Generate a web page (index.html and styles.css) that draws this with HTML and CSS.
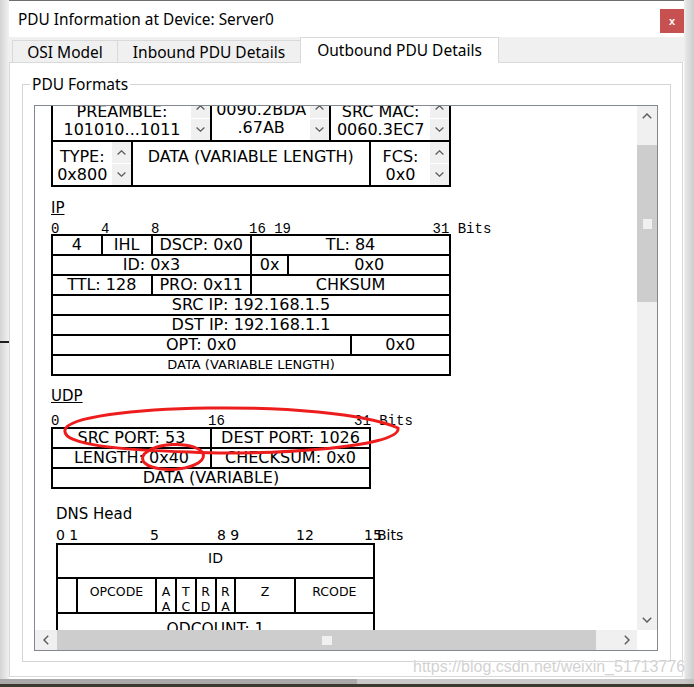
FILE: index.html
```html
<!DOCTYPE html>
<html lang="en">
<head>
<meta charset="utf-8">
<title>PDU Information at Device: Server0</title>
<link rel="stylesheet" href="styles.css">
</head>
<body>
<div class="desktop">
  <div class="window">
    <header class="titlebar">
      <h1 class="title">PDU Information at Device: Server0</h1>
      <button class="close" type="button">x</button>
    </header>
    <nav class="tabs">
      <div class="tab tab-osi">OSI Model</div>
      <div class="tab tab-in">Inbound PDU Details</div>
      <div class="tab tab-out active">Outbound PDU Details</div>
    </nav>
    <main class="panel">
      <fieldset class="group">
        <legend class="group-title">PDU Formats</legend>
        <div class="scrollpane">
          <div class="viewport">
            <div class="content">
              <table class="pdu eth">
                <colgroup><col span="40"></colgroup>
                <tr>
                  <td colspan="16"><div class="field"><div class="field-text"><span>PREAMBLE:</span><span>101010...1011</span></div><div class="spin"><span class="spin-btn"><svg class="chev" viewBox="0 0 9 5"><path d="M.6 4.4 4.5 .8 8.4 4.4"/></svg></span><span class="spin-btn"><svg class="chev" viewBox="0 0 9 5"><path d="M.6 .6 4.5 4.2 8.4 .6"/></svg></span></div></div></td>
                  <td colspan="12"><div class="field"><div class="field-text scrolled"><span>0090.2BDA</span><span>.67AB</span></div><div class="spin"><span class="spin-btn"><svg class="chev" viewBox="0 0 9 5"><path d="M.6 4.4 4.5 .8 8.4 4.4"/></svg></span><span class="spin-btn"><svg class="chev" viewBox="0 0 9 5"><path d="M.6 .6 4.5 4.2 8.4 .6"/></svg></span></div></div></td>
                  <td colspan="12"><div class="field"><div class="field-text"><span>SRC MAC:</span><span>0060.3EC7</span></div><div class="spin"><span class="spin-btn"><svg class="chev" viewBox="0 0 9 5"><path d="M.6 4.4 4.5 .8 8.4 4.4"/></svg></span><span class="spin-btn"><svg class="chev" viewBox="0 0 9 5"><path d="M.6 .6 4.5 4.2 8.4 .6"/></svg></span></div></div></td>
                </tr>
                <tr>
                  <td colspan="8"><div class="field"><div class="field-text"><span>TYPE:</span><span>0x800</span></div><div class="spin"><span class="spin-btn"><svg class="chev" viewBox="0 0 9 5"><path d="M.6 4.4 4.5 .8 8.4 4.4"/></svg></span><span class="spin-btn"><svg class="chev" viewBox="0 0 9 5"><path d="M.6 .6 4.5 4.2 8.4 .6"/></svg></span></div></div></td>
                  <td colspan="24"><div class="field"><div class="field-text"><span>DATA (VARIABLE LENGTH)</span></div></div></td>
                  <td colspan="8"><div class="field"><div class="field-text"><span>FCS:</span><span>0x0</span></div><div class="spin"><span class="spin-btn"><svg class="chev" viewBox="0 0 9 5"><path d="M.6 4.4 4.5 .8 8.4 4.4"/></svg></span><span class="spin-btn"><svg class="chev" viewBox="0 0 9 5"><path d="M.6 .6 4.5 4.2 8.4 .6"/></svg></span></div></div></td>
                </tr>
              </table>

              <h2 class="layer-title ip-title">IP</h2>
              <div class="bits bits-ip"><span class="b-0">0</span><span class="b-4">4</span><span class="b-8">8</span><span class="b-16">16 19</span><span class="b-31">31 Bits</span></div>
              <table class="pdu ip">
                <colgroup><col span="32"></colgroup>
                <tr><td colspan="4">4</td><td colspan="4">IHL</td><td colspan="8">DSCP: 0x0</td><td colspan="16">TL: 84</td></tr>
                <tr><td colspan="16">ID: 0x3</td><td colspan="3">0x</td><td colspan="13">0x0</td></tr>
                <tr><td colspan="8">TTL: 128</td><td colspan="8">PRO: 0x11</td><td colspan="16">CHKSUM</td></tr>
                <tr><td colspan="32">SRC IP: 192.168.1.5</td></tr>
                <tr><td colspan="32">DST IP: 192.168.1.1</td></tr>
                <tr><td colspan="24">OPT: 0x0</td><td colspan="8">0x0</td></tr>
                <tr><td colspan="32" class="small">DATA (VARIABLE LENGTH)</td></tr>
              </table>

              <h2 class="layer-title udp-title">UDP</h2>
              <div class="bits bits-udp"><span class="b-0">0</span><span class="b-16">16</span><span class="b-31">31 Bits</span></div>
              <table class="pdu udp">
                <colgroup><col span="32"></colgroup>
                <tr><td colspan="16">SRC PORT: 53</td><td colspan="16">DEST PORT: 1026</td></tr>
                <tr><td colspan="16">LENGTH: 0x40</td><td colspan="16">CHECKSUM: 0x0</td></tr>
                <tr><td colspan="32">DATA (VARIABLE)</td></tr>
              </table>

              <div class="dns-block">
                <h2 class="dns-title">DNS Head</h2>
                <div class="bits bits-dns"><span class="b-0">0 1</span><span class="b-5">5</span><span class="b-8">8 9</span><span class="b-12">12</span><span class="b-15">15</span><span class="b-bits">Bits</span></div>
                <table class="pdu dns">
                  <colgroup><col span="16"></colgroup>
                  <tr class="row-id"><td colspan="16"><div class="cell-id">ID</div></td></tr>
                  <tr class="row-flags">
                    <td><div class="flag"></div></td>
                    <td colspan="4"><div class="flag">OPCODE</div></td>
                    <td><div class="flag narrow">AA</div></td>
                    <td><div class="flag narrow">TC</div></td>
                    <td><div class="flag narrow">RD</div></td>
                    <td><div class="flag narrow">RA</div></td>
                    <td colspan="3"><div class="flag">Z</div></td>
                    <td colspan="4"><div class="flag">RCODE</div></td>
                  </tr>
                  <tr class="row-count"><td colspan="16"><div class="cell-count">QDCOUNT: 1</div></td></tr>
                </table>
              </div>
            </div>
          </div>
          <div class="vscroll">
            <span class="arrow-btn up"><svg class="sb-chev" viewBox="0 0 10 6"><path d="M.8 5.2 5 1 9.2 5.2"/></svg></span>
            <span class="track-before"></span>
            <span class="thumb"><span class="grip"></span></span>
            <span class="track-after"></span>
            <span class="arrow-btn down"><svg class="sb-chev" viewBox="0 0 10 6"><path d="M.8 .8 5 5 9.2 .8"/></svg></span>
          </div>
          <div class="hscroll">
            <span class="arrow-btn left"><svg class="sb-chev-h" viewBox="0 0 6 10"><path d="M5.2 .8 1 5 5.2 9.2"/></svg></span>
            <span class="thumb"><span class="grip"></span></span>
            <span class="track-after"></span>
            <span class="arrow-btn right"><svg class="sb-chev-h" viewBox="0 0 6 10"><path d="M.8 .8 5 5 .8 9.2"/></svg></span>
          </div>
          <div class="corner"></div>
        </div>
      </fieldset>
    </main>
  </div>
  <div class="shadow"></div>
  <div class="taskbar"></div>
</div>

<svg class="annotations" width="694" height="687" viewBox="0 0 694 687">
  <path d="M65 430 C70 404 330 398 398 428 C402 448 260 456 190 452 C120 450 62 445 65 430 Z"/>
  <ellipse cx="173" cy="457" rx="30.5" ry="12.5" transform="rotate(-3 173 457)"/>
</svg>
<div class="watermark">https://blog.csdn.net/weixin_51713776</div>
</body>
</html>
```

FILE: styles.css
```css
* { box-sizing: border-box; }
html, body { margin: 0; padding: 0; }
body {
  width: 694px;
  height: 687px;
  overflow: hidden;
  position: relative;
  font-family: "Noto Sans", sans-serif;
  color: #000;
}

.desktop {
  width: 694px;
  height: 687px;
  display: flex;
  flex-direction: column;
  background:
    linear-gradient(#1e1e1e, #1e1e1e) 0 341px / 9px 2px no-repeat,
    linear-gradient(to right, #d4d4d4 0, #f1f1f1 9px, #f1f1f1 684px, #e4e4e4 686px, #cdcdcd 694px);
}

.window {
  margin-left: 9px;
  width: 675px;
  height: 679px;
  background: #fff;
  border-top: 1px solid #6e6e6e;
  display: flex;
  flex-direction: column;
}

.shadow {
  height: 5px;
  background: linear-gradient(to right, #a9a9a9 0, #a9a9a9 357px, #c8c8c8 357px, #c8c8c8 684px, #bdbdbd 694px);
}
.taskbar { height: 3px; background: #3b3a2f; }

/* title bar */
.titlebar {
  height: 36px;
  display: flex;
  align-items: center;
  padding-left: 9px;
}
.title {
  margin: 0;
  font-size: 15.4px;
  font-weight: normal;
  color: #000;
}
.close {
  margin-left: auto;
  align-self: flex-start;
  margin-top: 8px;
  width: 24px;
  height: 24px;
  border: none;
  padding: 0;
  background: #c75050;
  color: #fff;
  font: bold 11px "Liberation Sans", sans-serif;
}

/* tabs */
.tabs {
  height: 25px;
  background: #f0f0f0;
  display: flex;
  align-items: flex-end;
  padding-left: 3px;
}
.tab {
  height: 22px;
  border: 1px solid #d9d9d9;
  border-bottom: none;
  display: flex;
  align-items: center;
  justify-content: center;
  font-size: 15.5px;
  margin-right: -1px;
  background: #f0f0f0;
}
.tab-osi { width: 106px; }
.tab-in { width: 184px; }
.tab-out { width: 199px; }
.tab.active {
  height: 26px;
  margin-bottom: -1px;
  background: #fff;
  position: relative;
  z-index: 1;
  padding-bottom: 1px;
}

/* panel */
.panel {
  flex: 1;
  margin-right: 1px;
  margin-bottom: 2px;
  border: 1px solid #d9d9d9;
  padding: 11px 11px 14px 12px;
  display: flex;
  flex-direction: column;
}
.group {
  margin: 0;
  min-width: 0;
  flex: 1;
  border: 1px solid #d5d5d5;
  padding: 11px 12px 10px 11px;
}
.group-title {
  font-size: 15.5px;
  line-height: 20px;
  padding: 0 2px;
  margin-left: -4px;
}

/* scroll pane */
.scrollpane {
  height: 546px;
  border: 1px solid #828790;
  display: grid;
  grid-template-columns: 1fr 20px;
  grid-template-rows: 1fr 20px;
}
.viewport {
  overflow: hidden;
  background: #fff;
}
.vscroll {
  background: #f0f0f0;
  display: flex;
  flex-direction: column;
}
.hscroll {
  background: #f0f0f0;
  display: flex;
}
.corner { background: #fff; }
.arrow-btn {
  display: flex;
  align-items: center;
  justify-content: center;
  flex: none;
}
.vscroll .arrow-btn.up { height: 20px; }
.vscroll .arrow-btn.down { height: 21px; }
.hscroll .arrow-btn.left { width: 22px; }
.hscroll .arrow-btn.right { width: 21px; }
.vscroll .track-before { height: 19px; flex: none; }
.vscroll .thumb { height: 157px; }
.hscroll .thumb { width: 539px; }
.thumb {
  flex: none;
  background: #cdcdcd;
  display: flex;
  align-items: center;
  justify-content: center;
}
.vscroll .grip { width: 9px; height: 10px; background: #f0f0f0; }
.hscroll .grip { width: 10px; height: 9px; background: #f0f0f0; }
.track-after { flex: 1; }
.sb-chev { width: 10px; height: 6px; fill: none; stroke: #606060; stroke-width: 1.5; }
.sb-chev-h { width: 6px; height: 10px; fill: none; stroke: #606060; stroke-width: 1.5; }

/* PDU content */
.content {
  padding-left: 16px;
  margin-top: -11px;
  font-family: "DejaVu Sans", sans-serif;
  color: #000;
}
.pdu {
  border-collapse: collapse;
  table-layout: fixed;
}
.pdu td {
  border: 2px solid #000;
  padding: 0;
  text-align: center;
  font-size: 16px;
  line-height: 16px;
  white-space: nowrap;
  overflow: hidden;
}

.eth { width: 400px; }
.eth tr { height: 45px; }
.eth td { vertical-align: top; }
.field { display: flex; height: 43px; }
.field-text {
  flex: 1;
  padding-top: 6px;
  line-height: 17.5px;
  display: flex;
  flex-direction: column;
  align-items: center;
}
.field-text.scrolled { padding-top: 4px; }
.spin {
  width: 19px;
  display: flex;
  flex-direction: column;
  gap: 1px;
  background: #fff;
}
.spin-btn {
  flex: 1;
  background: #f0f0f0;
  display: flex;
  align-items: center;
  justify-content: center;
}
.chev { width: 9px; height: 5px; fill: none; stroke: #5c5c5c; stroke-width: 1.3; }

.layer-title {
  margin: 0;
  font-size: 15px;
  line-height: 18px;
  font-weight: normal;
  text-decoration: underline;
}
.ip-title { margin-top: 12px; }
.udp-title { margin-top: 11px; }

.bits {
  display: grid;
  font-family: "Liberation Mono", monospace;
  font-size: 14px;
  line-height: 14px;
  white-space: pre;
}
.bits span { grid-row: 1; }
.bits-ip {
  grid-template-columns: repeat(32, 12.5px);
  height: 17px;
  padding-top: 5px;
}
.bits-ip .b-0 { grid-column: 1; }
.bits-ip .b-4 { grid-column: 5; }
.bits-ip .b-8 { grid-column: 9; }
.bits-ip .b-16 { grid-column: 17; margin-left: -2px; }
.bits-ip .b-31 { grid-column: 32; margin-left: -6px; }

.bits-udp {
  grid-template-columns: repeat(32, 10px);
  height: 22px;
  padding-top: 9px;
}
.bits-udp .b-0 { grid-column: 1; }
.bits-udp .b-16 { grid-column: 17; margin-left: -3px; }
.bits-udp .b-31 { grid-column: 32; margin-left: -7px; }

.ip { width: 400px; }
.udp { width: 320px; }
.ip tr, .udp tr { height: 20px; }
.ip td, .udp td { height: 20px; vertical-align: middle; }
.ip td.small { font-size: 13px; }

.dns-block { padding-left: 5px; }
.dns-title {
  margin: 16px 0 0;
  font-size: 15px;
  line-height: 18px;
  font-weight: normal;
}
.bits-dns {
  font-family: "DejaVu Sans", sans-serif;
  grid-template-columns: repeat(16, 20px);
  height: 20px;
  padding-top: 4.5px;
}
.bits-dns .b-0 { grid-column: 1; }
.bits-dns .b-5 { grid-column: 5; margin-left: 14px; }
.bits-dns .b-8 { grid-column: 9; margin-left: 1px; }
.bits-dns .b-12 { grid-column: 13; }
.bits-dns .b-15 { grid-column: 16; margin-left: 8px; }
.bits-dns .b-bits { grid-column: 16; margin-left: 21px; }

.dns { width: 319px; }
.dns td { vertical-align: top; }
.row-id { height: 34px; }
.cell-id {
  height: 32px;
  padding-top: 4px;
  font-size: 14px;
  line-height: 18px;
}
.row-flags { height: 35px; }
.flag {
  height: 33px;
  overflow: hidden;
  padding-top: 5px;
  font-size: 12.5px;
  line-height: 15px;
  white-space: normal;
}
.flag.narrow {
  padding-left: 2px;
  padding-right: 2px;
  word-break: break-all;
}
.row-count { height: 40px; }
.cell-count {
  height: 38px;
  padding-top: 6px;
  font-size: 15.5px;
  line-height: 18px;
}

/* annotations overlaid on the screenshot */
.annotations {
  position: absolute;
  left: 0;
  top: 0;
  pointer-events: none;
  fill: none;
  stroke: #ee1d1d;
  stroke-width: 3;
}
.watermark {
  position: absolute;
  left: 413px;
  top: 658px;
  font: 16px "Liberation Sans", sans-serif;
  color: #d2d2d2;
  text-shadow: 0 0 1px #fff, 0 0 1px #fff;
  white-space: nowrap;
  pointer-events: none;
}
```
